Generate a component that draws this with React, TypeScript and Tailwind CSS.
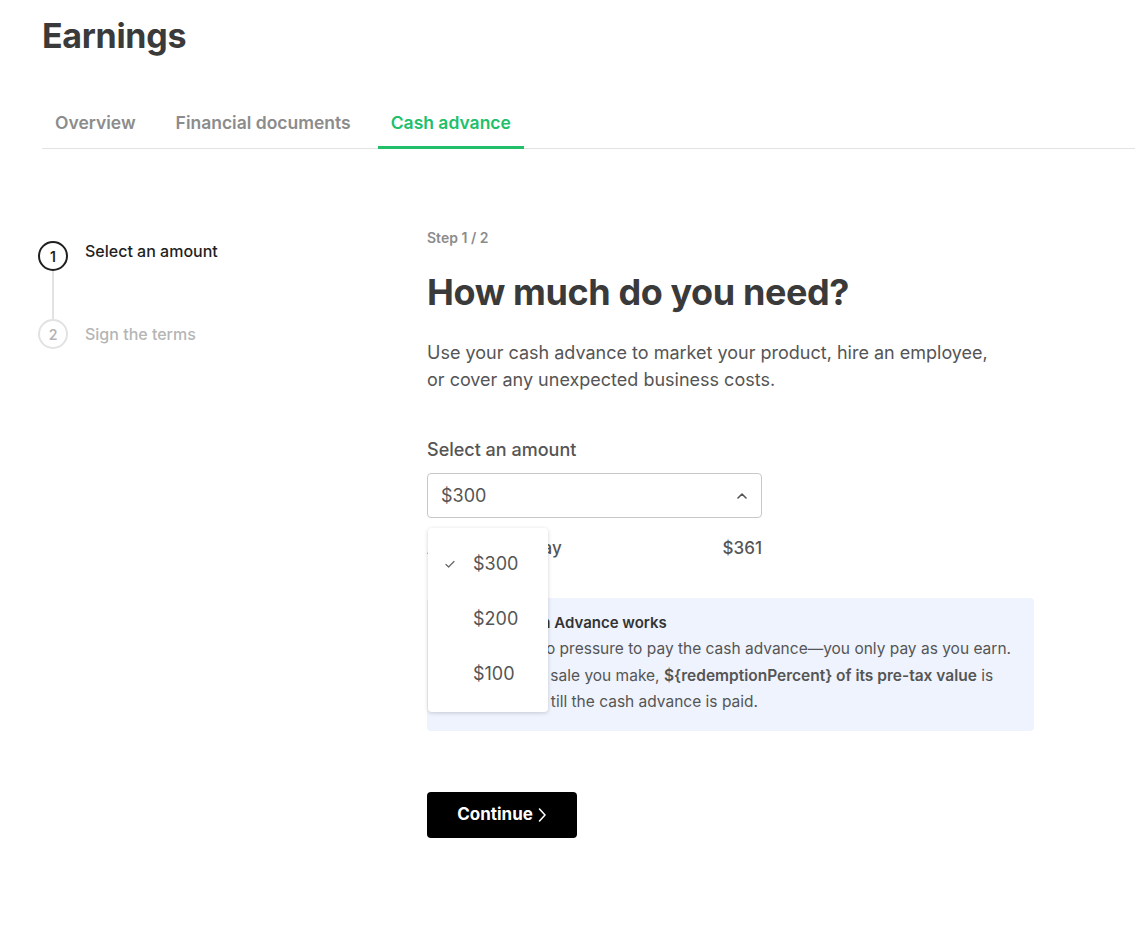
import React from 'react';

const amounts = ['$300', '$200', '$100'];

function Check() {
  return (
    <svg width="12" height="12" viewBox="0 0 12 12" fill="none" className="text-[#666]">
      <path d="M2 6.5 4.6 9 10 3.5" stroke="currentColor" strokeWidth="1.2" strokeLinecap="round" strokeLinejoin="round" />
    </svg>
  );
}

function ChevronUp() {
  return (
    <svg width="12" height="8" viewBox="0 0 12 8" fill="none" className="text-[#555]">
      <path d="M2 6 6 2l4 4" stroke="currentColor" strokeWidth="1.6" strokeLinecap="round" strokeLinejoin="round" />
    </svg>
  );
}

function ChevronRight() {
  return (
    <svg width="9" height="16" viewBox="0 0 9 16" fill="none">
      <path d="M1.5 2 7 8l-5.5 6" stroke="white" strokeWidth="1.6" strokeLinecap="round" strokeLinejoin="round" />
    </svg>
  );
}

function InfoIcon() {
  return (
    <svg width="20" height="20" viewBox="0 0 20 20" fill="none" className="mt-[1px] shrink-0 text-[#555]">
      <circle cx="10" cy="10" r="8.5" stroke="currentColor" strokeWidth="1.5" />
      <path d="M10 9v5" stroke="currentColor" strokeWidth="1.6" strokeLinecap="round" />
      <circle cx="10" cy="6.2" r="1" fill="currentColor" />
    </svg>
  );
}

export default function App() {
  return (
    <div className="min-h-screen bg-white font-['Inter',sans-serif] text-[#3a3a3a]">
      <header className="pl-[42px] pt-[16px]">
        <h1 className="text-[34px] font-bold leading-[40px] tracking-[-0.3px] text-[#3a3a3a]">Earnings</h1>
        <nav className="mt-[55px] flex gap-[14px] border-b border-[#e3e3e3]">
          <a className="px-[13px] pb-[13px] text-[17.5px] font-semibold leading-[24px] text-[#8c8c8c]">Overview</a>
          <a className="px-[13px] pb-[13px] text-[17.5px] font-semibold leading-[24px] text-[#8c8c8c]">Financial documents</a>
          <a className="-mb-px border-b-[3px] border-[#22bf6b] px-[13px] pb-[11px] text-[17.5px] font-semibold leading-[24px] text-[#22bf6b]">
            Cash advance
          </a>
        </nav>
      </header>

      <main className="flex pt-[80px]">
        {/* stepper */}
        <aside className="w-[427px] shrink-0 pl-[38px] pt-[12px]">
          <div className="flex items-start gap-[17px]">
            <div className="flex flex-col items-center">
              <span className="flex h-[30px] w-[30px] items-center justify-center rounded-full border-2 border-[#1f1f1f] text-[14px] font-semibold text-[#1f1f1f]">
                1
              </span>
              <span className="h-[48px] w-[2px] bg-[#e2e2e2]" />
            </div>
            <span className="pt-[1px] text-[16px] font-medium leading-[18px] text-[#1f1f1f]">Select an amount</span>
          </div>
          <div className="flex items-center gap-[17px]">
            <span className="flex h-[30px] w-[30px] items-center justify-center rounded-full border-2 border-[#e2e2e2] text-[14px] font-semibold text-[#b5b5b5]">
              2
            </span>
            <span className="text-[16px] font-medium leading-[18px] text-[#b5b5b5]">Sign the terms</span>
          </div>
        </aside>

        {/* form */}
        <section className="w-[607px]">
          <p className="text-[14px] font-semibold leading-[18px] text-[#8c8c8c]">Step 1 / 2</p>
          <h2 className="mt-[23px] text-[36px] font-bold leading-[44px] tracking-[-0.4px] text-[#3a3a3a]">How much do you need?</h2>
          <p className="mt-[25px] w-[565px] text-[18px] leading-[27px] text-[#555]">
            Use your cash advance to market your product, hire an employee, or cover any unexpected business costs.
          </p>

          <label className="mt-[45px] block text-[18px] font-medium leading-[24px] text-[#555]">Select an amount</label>
          <div className="relative mt-[11px] w-[335px]">
            <button className="flex h-[45px] w-full items-center justify-between rounded-[4px] border border-[#c8c8c8] px-[13px] text-[18px] text-[#555]">
              <span>$300</span>
              <ChevronUp />
            </button>

            <ul className="absolute left-[1px] top-[55px] z-10 w-[120px] rounded-[4px] bg-white pt-[8px] pb-[11px] shadow-[0_1px_4px_rgba(0,0,0,0.18)]">
              {amounts.map((a, i) => (
                <li key={a} className="flex h-[55px] items-center pl-[16px] text-[18px] text-[#555]">
                  <span className="w-[29px]">{i === 0 && <Check />}</span>
                  {a}
                </li>
              ))}
            </ul>
          </div>

          <div className="mt-[18px] flex w-[335px] items-center justify-between text-[17px] font-medium leading-[24px] text-[#555]">
            <span>Amount to repay</span>
            <span>$361</span>
          </div>

          <div className="mt-[38px] flex w-[607px] gap-[12px] rounded-[4px] bg-[#eef3fd] py-[15px] pl-[18px] pr-[17px]">
            <InfoIcon />
            <div>
              <p className="text-[15px] font-semibold leading-[20px] text-[#333]">How Cash Advance works</p>
              <p className="mt-[3px] text-[15.5px] leading-[26.5px] text-[#555]">
                There's no pressure to pay the cash advance—you only pay as you earn. For every sale you make,{' '}
                <b className="font-semibold">{'${redemptionPercent} of its pre-tax value'}</b> is deducted till the cash advance is paid.
              </p>
            </div>
          </div>

          <button className="mt-[61px] flex h-[46px] w-[150px] items-center justify-center gap-[5px] rounded-[4px] bg-black text-[17px] font-bold text-white">
            Continue
            <ChevronRight />
          </button>
        </section>
      </main>
    </div>
  );
}
